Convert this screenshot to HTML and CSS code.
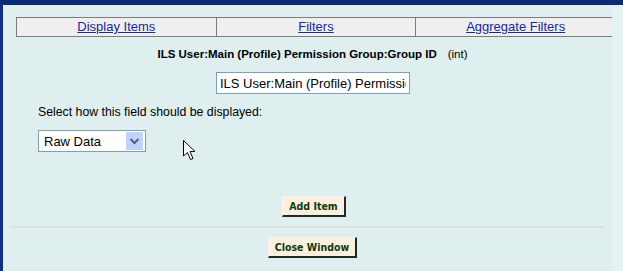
FILE: index.html
```html
<!DOCTYPE html>
<html>
<head>
<meta charset="utf-8">
<link rel="stylesheet" href="styles.css">
</head>
<body>
<div class="frame">
  <div class="page">
    <table class="tabs">
      <tr>
        <td><a href="#">Display Items</a></td>
        <td><a href="#">Filters</a></td>
        <td><a href="#">Aggregate Filters</a></td>
      </tr>
    </table>
    <div class="title"><b>ILS User:Main (Profile) Permission Group:Group ID</b><span class="type">(int)</span></div>
    <div class="inrow"><input class="field" type="text" value="ILS User:Main (Profile) Permission Group:Group ID"></div>
    <div class="label">Select how this field should be displayed:</div>
    <div class="selrow">
      <div class="select"><span>Raw Data</span><span class="arrow"><svg width="17" height="18" viewBox="0 0 17 18"><path d="M4.5 7 L8.5 11 L12.5 7" fill="none" stroke="#4d6185" stroke-width="2"/></svg></span></div>
      <svg class="cursor" width="13" height="21" viewBox="0 0 13 21"><path d="M0.5 0.5 L0.5 16 L4.5 12.5 L7.5 19.5 L10 18.5 L7 11.5 L12 11.5 Z" fill="#fff" stroke="#000" stroke-width="1"/></svg>
    </div>
    <div class="btnrow add"><button class="btn">Add Item</button></div>
    <div class="rule"></div>
    <div class="btnrow close"><button class="btn">Close Window</button></div>
  </div>
  <div class="edge"></div>
</div>
</body>
</html>
```

FILE: styles.css
```css
html, body {
  margin: 0;
  padding: 0;
  background: #dfeeef;
}
.frame {
  width: 623px;
  height: 271px;
  box-sizing: border-box;
  border-top: 5px solid #0b2a78;
  border-left: 3px solid #0d2f8a;
  display: flex;
  font-family: "Liberation Sans", Arial, sans-serif;
}
.page {
  width: 609px;
  background: #dfeeef;
  display: flex;
  flex-direction: column;
}
.edge {
  flex: 1;
  background: #e5f2f4;
}
.tabs {
  margin: 12px 0 0 13px;
  width: 600px;
  height: 20px;
  border-collapse: collapse;
  background: #efefef;
}
.tabs td {
  border: 1px solid #7d7d7d;
  text-align: center;
  width: 33.33%;
  padding: 0;
  font-size: 13px;
  line-height: 18px;
}
.tabs a {
  color: #16299b;
  text-decoration: underline;
}
.title {
  margin-top: 9px;
  text-align: center;
  font-size: 11.5px;
  line-height: 16px;
  color: #000;
  padding-left: 10px;
}
.title .type {
  margin-left: 11px;
  font-weight: normal;
}
.inrow {
  margin-top: 10px;
  padding-left: 213px;
}
.field {
  box-sizing: border-box;
  width: 194px;
  height: 22px;
  border: 1px solid #7f9db9;
  background: #fff;
  font-family: "Liberation Sans", Arial, sans-serif;
  font-size: 13px;
  padding: 0 3px;
  margin: 0;
  color: #000;
}
.label {
  margin-top: 11px;
  padding-left: 35px;
  font-size: 12.3px;
  line-height: 15px;
  color: #000;
}
.selrow {
  position: relative;
  margin-top: 10px;
  padding-left: 35px;
  height: 22px;
}
.select {
  box-sizing: border-box;
  width: 108px;
  height: 22px;
  border: 1px solid #7f9db9;
  background: #fff;
  display: flex;
  align-items: center;
  justify-content: space-between;
  padding: 0 2px 0 5px;
  font-size: 13px;
}
.arrow {
  width: 17px;
  height: 18px;
  background: #c1d3fb;
  display: flex;
}
.cursor {
  position: absolute;
  left: 180px;
  top: 10px;
}
.btnrow {
  display: flex;
  justify-content: center;
  padding-left: 2px;
}
.add {
  margin-top: 44px;
  padding-left: 13px;
}
.btn {
  font-family: "DejaVu Sans Condensed", "DejaVu Sans", sans-serif;
  font-weight: bold;
  font-size: 10.5px;
  color: #0c3a0c;
  background: #fcefdf;
  border-style: solid;
  border-width: 1px 2px 2px 1px;
  border-color: #f4f4f4 #1e2a1e #1e2a1e #f4f4f4;
  height: 21px;
  padding: 0 6px;
  margin: 0;
}
.rule {
  margin: 9px 7px 0 7px;
  height: 2px;
  background: #d5e3e3;
}
.close {
  margin-top: 9px;
  padding-left: 10px;
}
```
